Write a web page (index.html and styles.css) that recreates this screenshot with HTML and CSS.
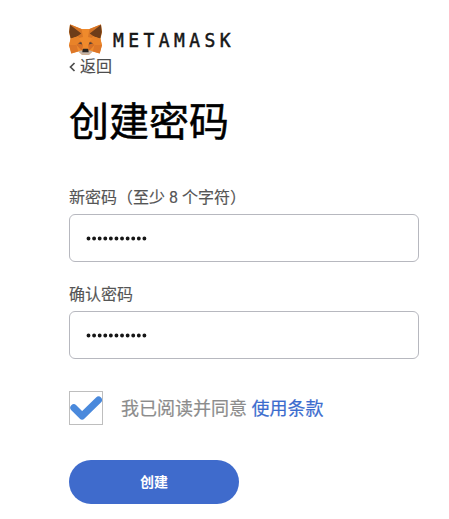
FILE: index.html
```html
<!DOCTYPE html>
<html lang="zh-CN">
<head>
<meta charset="utf-8">
<title>MetaMask</title>
<link rel="stylesheet" href="styles.css">
</head>
<body>
<main class="page">
  <header class="brand">
    <svg class="fox" viewBox="0 0 33 31" aria-hidden="true">
      <path fill="#ef8a2c" d="M1 .5 12.500 5h8L32 .5 33 8l-1.500 7L33 21l-2.500 8.500-7-2-3.500 3.300h-7l-3.500-3.300-7 2L0 21l1.500-6L0 8z"/>
      <path fill="#d87626" d="M1 .3 12.500 5 14 13l-4 1zM32 .3 20.500 5 19 13l4 1z"/>
      <path fill="#6e3d19" d="M1 .8 12.300 9.500 8 12.500l-6.300 2L.2 8zM32 .8 20.700 9.500 25 12.500l6.300 2L32.800 8z"/>
      <path fill="#e98329" d="m1.500 15 7-2.500L11.500 17l-4 4H.3zM31.500 15l-7-2.500L21.500 17l4 4h7.200z"/>
      <path fill="#d67027" d="m7.500 21 4-4 2.500 4-1 6zM25.500 21l-4-4-2.500 4 1 6z"/>
      <path fill="#4d4038" d="m9 19.200 3.300-1.200.8 2.400zM24 19.200 20.700 18l-.8 2.400z"/>
      <path fill="#dd7728" d="M0 21h7.500l1.700 6.300-7 2.200zM33 21h-7.500l-1.700 6.300 7 2.200z"/>
      <path fill="#c5b3a4" d="m9.200 27.300 3.800-1 1 1h5l1-1 3.800 1-3.800 3.500h-7z"/>
      <path fill="#292522" d="m13.700 25.200.6-.5h4.400l.6.500.4 3h-6.400z"/>
    </svg>
    <svg class="wordmark" viewBox="0 0 126 20"><text x="0" y="15.700" transform="scale(.92 1.030)">METAMASK</text></svg>
  </header>
  <a class="back"><svg class="chevron" viewBox="0 0 7 10"><path d="M5.500 1 1.500 5l4 4"/></svg>返回</a>
  <h1 class="title">创建密码</h1>
  <form class="form">
    <label class="label" for="password">新密码（至少 8 个字符）</label>
    <div class="field" id="password"><svg class="dots" viewBox="0 0 62 5"><path d="M2.500 2.500h56"/></svg></div>
    <label class="label second" for="confirm">确认密码</label>
    <div class="field" id="confirm"><svg class="dots" viewBox="0 0 62 5"><path d="M2.500 2.500h56"/></svg></div>
    <div class="terms">
      <span class="checkbox"><svg class="check" viewBox="0 0 32 32"><path d="m3.800 15.800 8.300 8.200L28.500 8"/></svg></span>
      <span class="agree">我已阅读并同意 <a class="link">使用条款</a></span>
    </div>
    <button class="submit" type="button">创建</button>
  </form>
</main>
</body>
</html>
```

FILE: styles.css
```css
* { box-sizing: border-box; }
body {
  margin: 0;
  background: #fff;
  font-family: Roboto, "Noto Sans CJK SC", sans-serif;
}
.page { width: 350px; margin: 24px 0 0 69px; }
.brand { display: flex; height: 31px; }
.fox { width: 33px; height: 31px; }
.wordmark { width: 126px; height: 20px; margin: 7px 0 0 11px; overflow: visible; }
.wordmark text {
  font: 19.500px "DejaVu Sans Mono", monospace;
  letter-spacing: 4.850px;
  fill: #161616;
  stroke: #161616;
  stroke-width: .5px;
}
.back {
  display: flex;
  align-items: center;
  height: 24px;
  font-size: 16px;
  line-height: 24px;
  color: #4d4d4d;
  -webkit-text-stroke: .15px #4d4d4d;
}
.chevron { width: 7px; height: 10px; margin-right: 4px; }
.chevron path { fill: none; stroke: #4d4d4d; stroke-width: 1.700; }
.title {
  margin: 16px 0 0;
  font-size: 40px;
  font-weight: 400;
  line-height: 56px;
  color: #000;
  -webkit-text-stroke: .5px #000;
}
.form { margin-top: 36px; }
.label {
  display: block;
  height: 27px;
  font-size: 16px;
  line-height: 22px;
  color: #555;
  -webkit-text-stroke: .15px #555;
}
.second { margin-top: 22px; }
.field {
  display: flex;
  align-items: center;
  height: 48px;
  padding-left: 16px;
  border: 1px solid #b7b8bf;
  border-radius: 6px;
}
.dots { width: 62px; height: 5px; }
.dots path {
  fill: none;
  stroke: #161616;
  stroke-width: 3.900;
  stroke-linecap: round;
  stroke-dasharray: 0 5.590;
}
.terms { display: flex; align-items: center; margin-top: 32px; }
.checkbox { width: 34px; height: 34px; border: 1px solid #bebebe; }
.check { display: block; width: 32px; height: 32px; }
.check path { fill: none; stroke: #4a89dc; stroke-width: 7; stroke-linejoin: round; stroke-linecap: round; }
.agree { margin-left: 18px; padding-top: 2px; font-size: 18px; line-height: 26px; color: #8c8c8c; white-space: nowrap; -webkit-text-stroke: .2px; }
.link { color: #3b6cce; }
.submit {
  display: block;
  width: 170px;
  height: 44px;
  margin-top: 35px;
  padding: 0;
  border: 0;
  border-radius: 22px;
  background: #3f6bcc;
  color: #fff;
  font: 700 14px/20px Roboto, "Noto Sans CJK SC", sans-serif;
}
```
